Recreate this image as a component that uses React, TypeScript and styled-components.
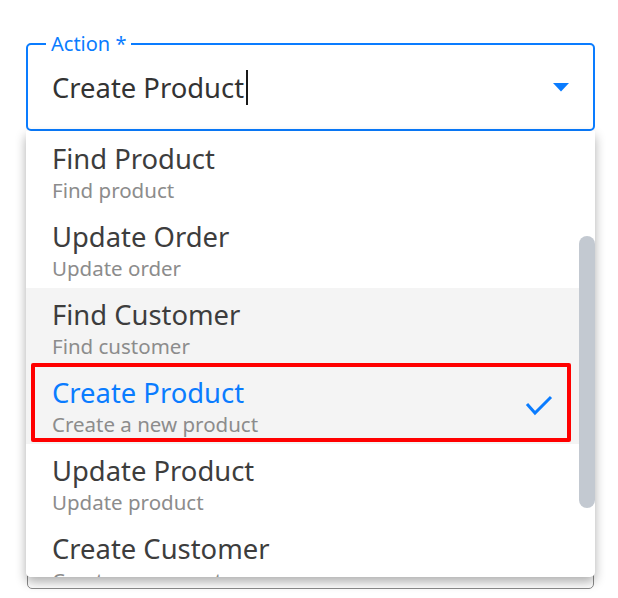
import React from 'react';
import styled, { createGlobalStyle } from 'styled-components';

const blue = '#0a7cff';

const GlobalStyle = createGlobalStyle`
  html, body {
    margin: 0;
    padding: 0;
    background: #ffffff;
    font-family: "Noto Sans", "Open Sans", sans-serif;
  }
`;

const Page = styled.div`
  width: 618px;
  height: 598px;
  padding: 33px 23px 0 26px;
  box-sizing: border-box;
  display: flex;
  flex-direction: column;
  gap: 24px;
  overflow: hidden;
`;

const FieldWrap = styled.div`
  position: relative;
`;

const Fieldset = styled.fieldset`
  margin: 0;
  padding: 15px 24px 24px 24px;
  border: 2px solid ${blue};
  border-radius: 5px;
  min-width: 0;
`;

const Legend = styled.legend`
  margin-left: -6px;
  padding: 0 5px;
  font-size: 20px;
  line-height: 22px;
  color: ${blue};
`;

const ValueRow = styled.div`
  display: flex;
  align-items: center;
  justify-content: space-between;
  height: 35px;
`;

const Value = styled.div`
  display: flex;
  align-items: center;
  font-size: 27.4px;
  line-height: 35px;
  color: #333333;
`;

const Caret = styled.span`
  display: inline-block;
  width: 2px;
  height: 35px;
  margin-left: 2px;
  background: #1a1a1a;
`;

const Menu = styled.div`
  position: absolute;
  top: 100%;
  left: 0;
  right: 0;
  height: 446px;
  display: flex;
  background: #ffffff;
  border-radius: 0 0 5px 5px;
  box-shadow: 0 5px 11px rgba(0, 0, 0, 0.32);
  overflow: hidden;
  z-index: 2;
`;

const List = styled.ul`
  flex: 1;
  margin: 0;
  padding: 1px 0 0 0;
  list-style: none;
`;

const Item = styled.li<{ $hover?: boolean; $selected?: boolean }>`
  position: relative;
  height: 78px;
  box-sizing: border-box;
  padding: 10px 26px 0 26px;
  display: flex;
  justify-content: space-between;
  background: ${p => (p.$hover || p.$selected ? '#f4f4f4' : '#ffffff')};

  ${p =>
    p.$selected &&
    `
    &::after {
      content: '';
      position: absolute;
      top: -3px;
      left: 5px;
      right: 8px;
      bottom: 2px;
      border: 4px solid #ff0000;
      border-radius: 2px;
    }
  `}
`;

const Title = styled.div<{ $selected?: boolean }>`
  font-size: 27.4px;
  line-height: 34px;
  color: ${p => (p.$selected ? blue : '#3d3d3d')};
`;

const Subtitle = styled.div`
  margin-top: 1px;
  font-size: 20.5px;
  line-height: 26px;
  color: #8c8c8c;
`;

const Check = styled.svg`
  align-self: center;
  margin-top: -9px;
`;

const Track = styled.div`
  width: 16px;
  padding-top: 105px;
  box-sizing: border-box;
`;

const Thumb = styled.div`
  height: 272px;
  background: #c3c9d1;
  border-radius: 8px;
`;

const OtherField = styled.div`
  height: 432px;
  flex-shrink: 0;
  border: 1px solid #8a8a8a;
  border-radius: 5px;
  margin: 0 1px;
`;

const options = [
  { title: 'Find Product', sub: 'Find product' },
  { title: 'Update Order', sub: 'Update order' },
  { title: 'Find Customer', sub: 'Find customer', hover: true },
  { title: 'Create Product', sub: 'Create a new product', selected: true },
  { title: 'Update Product', sub: 'Update product' },
  { title: 'Create Customer', sub: 'Create a new customer' },
];

export default function App() {
  return (
    <Page>
      <GlobalStyle />
      <FieldWrap>
        <Fieldset>
          <Legend>Action *</Legend>
          <ValueRow>
            <Value>
              Create Product
              <Caret />
            </Value>
            <svg width="16" height="9" viewBox="0 0 16 9">
              <path d="M0 0 L16 0 L8 8.5 Z" fill={blue} />
            </svg>
          </ValueRow>
        </Fieldset>
        <Menu>
          <List>
            {options.map(o => (
              <Item key={o.title} $hover={o.hover} $selected={o.selected}>
                <div>
                  <Title $selected={o.selected}>{o.title}</Title>
                  <Subtitle>{o.sub}</Subtitle>
                </div>
                {o.selected && (
                  <Check width="28" height="22" viewBox="0 0 28 22">
                    <path d="M2 9 L10 18 L26 2" fill="none" stroke={blue} strokeWidth="3" />
                  </Check>
                )}
              </Item>
            ))}
          </List>
          <Track>
            <Thumb />
          </Track>
        </Menu>
      </FieldWrap>
      <OtherField />
    </Page>
  );
}
